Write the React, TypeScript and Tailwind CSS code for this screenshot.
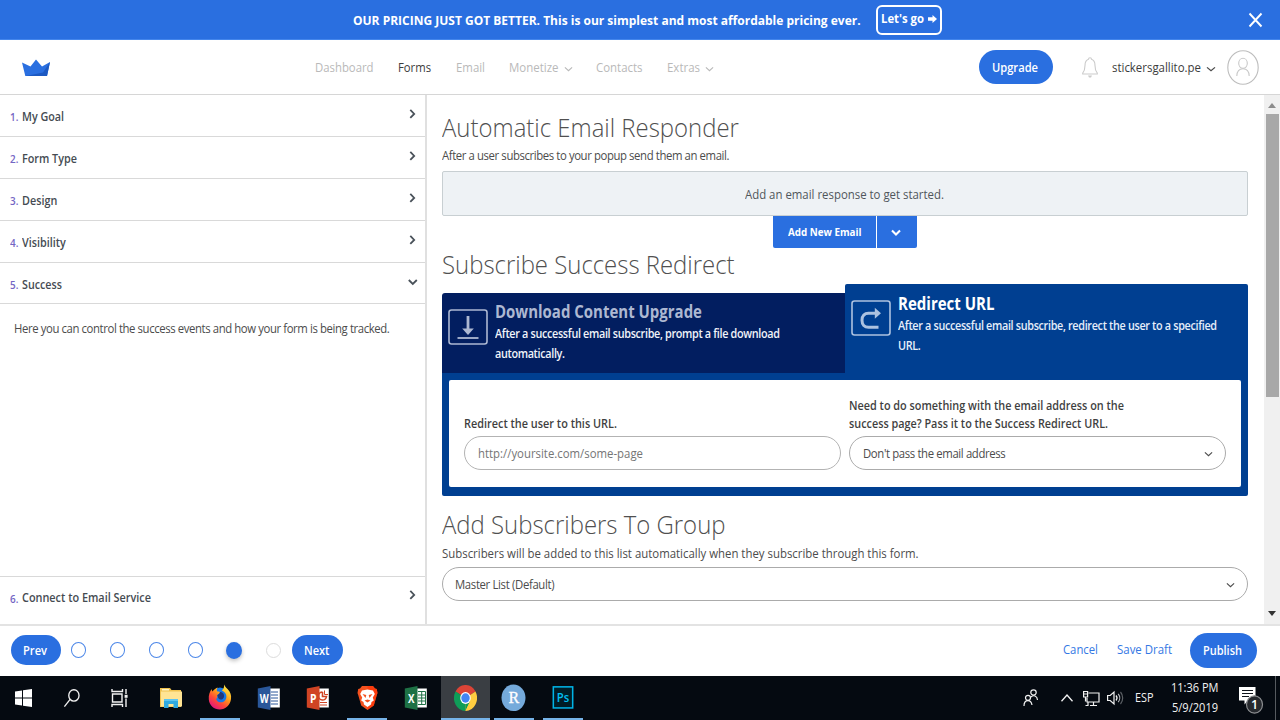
import type { ReactNode } from "react";

function T({ box = "", className, children }: { box?: string; className: string; children: ReactNode }) {
  return (
    <span className={"block shrink-0 whitespace-nowrap " + box}>
      <span className={"inline-block origin-left " + className}>{children}</span>
    </span>
  );
}

function Chevron({ className, width = 1.2 }: { className: string; width?: number }) {
  return (
    <svg viewBox="0 0 10 7" preserveAspectRatio="none" className={"shrink-0 overflow-visible " + className} fill="none" stroke="currentColor" strokeWidth={width}>
      <path d="M1 1.5l4 4 4-4" />
    </svg>
  );
}

function Banner() {
  return (
    <div className="flex h-10 items-center border-b border-[#4486ec] bg-[#2a6fe0] pl-[353px] text-[13px] font-bold text-white">
      <T box="w-[523px] pt-0.5" className="scale-x-[0.923]">
        OUR PRICING JUST GOT BETTER. This is our simplest and most affordable pricing ever.
      </T>
      <button className="mt-px flex h-[30px] w-[66px] items-center rounded-[6px] border-2 border-white pl-[2.500px]">
        <T box="w-[47.500px] -mt-0.5" className="scale-x-[0.871]">Let's go</T>
        <svg viewBox="0 0 9 8" className="-mt-0.5 h-2 w-[9px]" fill="white">
          <path d="M0 2.200h4.500V0L9 4 4.500 8V5.800H0z" />
        </svg>
      </button>
      <svg viewBox="0 0 14 16" className="ml-[306px] h-4 w-[15px]" stroke="white" strokeWidth="1.9" fill="none">
        <path d="M1 1.5l12 13M13 1.5L1 14.500" />
      </svg>
    </div>
  );
}

function Header() {
  return (
    <header className="flex h-[55px] items-center border-b border-[#d6d6d6] text-[12px] text-[#b9b9b9]">
      <svg viewBox="0 0 28 18" className="mt-px ml-[22px] h-[18px] w-7 shrink-0">
        <path d="M0 3.500l8.500 4L14 0.500l6 7L28 3l-3 14H3.300z" fill="#2a6fe0" />
        <path d="M28 3l-3 14H4l17-3.500z" fill="#1c59c2" />
      </svg>
      <nav className="ml-[265px] flex items-center pt-0.5">
        <T box="w-[83px]" className="scale-x-[0.945]">Dashboard</T>
        <T box="w-[57.5px] text-[#3c3c3c]" className="scale-x-[0.94]">Forms</T>
        <T box="w-[53px]" className="scale-x-[0.95]">Email</T>
        <T box="w-[55px]" className="scale-x-[0.956]">Monetize</T>
        <Chevron className="mt-0.5 mr-[23.500px] h-[6px] w-[9px]" />
        <T box="w-[70.5px]" className="scale-x-[0.952]">Contacts</T>
        <T box="w-[38px]" className="scale-x-[0.956]">Extras</T>
        <Chevron className="mt-0.5 h-[6px] w-[9px]" />
      </nav>
      <button className="ml-[265px] flex h-[34px] w-[74px] shrink-0 items-center rounded-full bg-[#2a6fe0] pl-[13.500px] font-semibold text-white">
        <T box="pt-0.5" className="scale-x-[0.928]">Upgrade</T>
      </button>
      <svg viewBox="0 0 16 22" className="ml-[29.5px] h-[22px] w-4 shrink-0" fill="none" stroke="#cbcbcb" strokeWidth="1.1">
        <path d="M6.500 3.200a1.500 1.500 0 0 1 3 0C12 4 13 6.500 13 9.500c0 4 .5 5.500 2.300 7.700v.8H.7v-.8C2.500 15 3 13.500 3 9.500c0-3 1-5.500 3.500-6.300z" />
        <path d="M6 19.500h4L9 21.500H7z" fill="#cbcbcb" stroke="none" />
      </svg>
      <T box="w-[94px] ml-[13.5px] pt-0.5 text-[#3c3c3c]" className="scale-x-[0.952]">stickersgallito.pe</T>
      <Chevron className="mt-[3px] h-[6px] w-[10px] text-[#4a4a4a]" />
      <svg viewBox="0 0 32 35" className="ml-[11px] h-[35px] w-8 shrink-0" fill="none" stroke="#bdbdbd" strokeWidth="1.1">
        <ellipse cx="16" cy="17.500" rx="15.200" ry="16.700" />
        <ellipse cx="16" cy="13.300" rx="4.300" ry="5" stroke="#c8c8c8" />
        <path d="M9.800 26c.2-5 2.700-7.200 6.200-7.200s6 2.200 6.200 7.200" stroke="#c8c8c8" />
      </svg>
    </header>
  );
}

function Step({ n, label, scale, open }: { n: number; label: string; scale: string; open?: boolean }) {
  return (
    <div className="flex h-[41.9px] items-center border-b border-[#d9d9d9] pl-[10px] text-[12px] font-semibold last:border-b-0">
      <T box="w-[11.5px] pt-1 text-[11px] text-[#7466c4]" className="scale-x-[0.9]">{n}.</T>
      <T box="w-[386px] pt-[3px] text-[#454b52]" className={scale}>{label}</T>
      <svg viewBox="0 0 10 10" className="-mt-[3px] size-[10px]" fill="none" stroke="#4a525a" strokeWidth="1.800">
        <path d={open ? "M.8 3L4.800 7 8.800 3" : "M2.300.9L6.200 4.900 2.300 8.900"} />
      </svg>
    </div>
  );
}

function Sidebar() {
  return (
    <aside className="flex w-[427px] shrink-0 flex-col border-r-2 border-[#e0e0e0]">
      <Step n={1} label="My Goal" scale="scale-x-[0.895]" />
      <Step n={2} label="Form Type" scale="scale-x-[0.9]" />
      <Step n={3} label="Design" scale="scale-x-[0.9]" />
      <Step n={4} label="Visibility" scale="scale-x-[0.9]" />
      <Step n={5} label="Success" scale="scale-x-[0.894]" open />
      <div className="flex-1 pt-4 pl-[14px] text-[12px] leading-[18px] text-[#4c4c4c]">
        <T className="scale-x-[0.945] tracking-[-0.42px]">
          Here you can control the success events and how your form is being tracked.
        </T>
      </div>
      <div className="h-12 border-t border-[#d9d9d9]">
        <div className="-mt-px">
          <Step n={6} label="Connect to Email Service" scale="scale-x-[0.906]" />
        </div>
      </div>
    </aside>
  );
}

function Heading({ children, className }: { children: ReactNode; className: string }) {
  return (
    <h2 className={"h-8 text-[26px] leading-8 font-light text-[#505050] " + className}>
      <T className="scale-x-[0.92]">{children}</T>
    </h2>
  );
}

function IconBox({ children }: { children: ReactNode }) {
  return (
    <svg viewBox="0 0 40 36" className="h-9 w-10 shrink-0" fill="none" stroke="currentColor">
      <rect x="1" y="1" width="38" height="34" rx="2.500" strokeWidth="1.600" />
      {children}
    </svg>
  );
}

function Main() {
  return (
    <main className="w-[837px] shrink-0 overflow-hidden pr-4 pl-[15px] text-[12px] text-[#4c4c4c]">
      <Heading className="mt-4">Automatic Email Responder</Heading>
      <p className="mt-1 h-[18px] leading-[18px]">
        <T className="scale-x-[0.945] tracking-[-0.42px]">After a user subscribes to your popup send them an email.</T>
      </p>
      <div className="mt-[6px] flex h-[45px] items-center rounded-[2px] border border-[#c8cfd2] bg-[#eef2f5] pt-0.5 pl-[302px] text-[#50565b]">
        <T className="scale-x-[0.95]">Add an email response to get started.</T>
      </div>
      <div className="ml-[331px] flex h-8 w-[144px] gap-px overflow-hidden rounded-b-[2px] text-white">
        <button className="flex h-8 w-[102.500px] items-center bg-[#2a6fe0] pl-[14.5px] text-[11px] font-bold">
          <T className="scale-x-[0.892]">Add New Email</T>
        </button>
        <button className="flex h-8 flex-1 items-center justify-center bg-[#2a6fe0] pr-px">
          <Chevron className="mt-px h-[7px] w-[10px]" width={2.1} />
        </button>
      </div>
      <Heading className="mt-0">Subscribe Success Redirect</Heading>
      <section className="mt-1 text-white">
        <div className="flex items-end">
          <div className="flex h-20 w-[403px] rounded-tl-[3px] bg-[#021e60] pt-4 pl-[6px] text-[#adb8d2]">
            <IconBox>
              <path d="M20 7v15" strokeWidth="2.800" />
              <path d="M14.200 19.500h11.600L20 26z" fill="currentColor" stroke="none" />
              <path d="M9.500 29h21" strokeWidth="1.800" />
            </IconBox>
            <div className="-mt-2 pl-[7px]">
              <T box="text-[17px] font-bold leading-[22px]" className="scale-x-[0.881]">Download Content Upgrade</T>
              <div className="pt-px font-semibold leading-5 text-[#f1f4fa]">
                <T className="scale-x-[0.9] tracking-[-0.36px]">After a successful email subscribe, prompt a file download</T>
                <T className="scale-x-[0.9] tracking-[-0.36px]">automatically.</T>
              </div>
            </div>
          </div>
          <div className="flex h-[89px] w-[403px] rounded-t-[2px] bg-[#003f91] pt-4 pl-[6px] text-[#adc2e0]">
            <IconBox>
              <path d="M27.500 27.300H17.500c-4 0-6.500-2.600-6.500-7s2.500-7 6.500-7h7" strokeWidth="3" />
              <path d="M23.800 7.800L30 13.300l-6.200 5.500z" fill="currentColor" stroke="none" />
            </IconBox>
            <div className="-mt-[7px] pl-[7px]">
              <T box="text-[17px] font-bold leading-[22px] text-white" className="scale-x-[0.884]">Redirect URL</T>
              <div className="pt-px font-semibold leading-5 text-[#e6eefa]">
                <T className="scale-x-[0.9] tracking-[-0.36px]">After a successful email subscribe, redirect the user to a specified</T>
                <T className="scale-x-[0.9] tracking-[-0.36px]">URL.</T>
              </div>
            </div>
          </div>
        </div>
        <div className="h-[123px] rounded-b-[2px] bg-[#003f91] px-[7px] pt-[7px]">
          <div className="flex h-[107px] items-end gap-[7.500px] rounded-[2px] bg-white pb-[17px] pl-[14.500px] text-[#3f3f3f]">
            <div className="w-[377.500px]">
              <label className="block pb-[3px] font-semibold leading-[18px]">
                <T className="scale-x-[0.907]">Redirect the user to this URL.</T>
              </label>
              <div className="flex h-[34px] items-center rounded-full border border-[#b3b3b3] pt-0.5 pl-[13px] text-[#757575]">
                <T className="scale-x-[0.948]">http://yoursite.com/some-page</T>
              </div>
            </div>
            <div className="w-[377.500px]">
              <label className="block pb-[3px] font-semibold leading-[18px]">
                <T className="scale-x-[0.905]">Need to do something with the email address on the</T>
                <T className="scale-x-[0.902]">success page? Pass it to the Success Redirect URL.</T>
              </label>
              <div className="flex h-[34px] items-center justify-between rounded-full border border-[#ababab] pt-0.5 pr-3 pl-[13px] text-[#4c4c4c]">
                <T className="scale-x-[0.945] tracking-[-0.39px]">Don't pass the email address</T>
                <Chevron className="h-[6px] w-[9px]" />
              </div>
            </div>
          </div>
        </div>
      </section>
      <Heading className="mt-3">Add Subscribers To Group</Heading>
      <p className="mt-[4.500px] h-[18px] leading-[18px]">
        <T className="scale-x-[0.95]">Subscribers will be added to this list automatically when they subscribe through this form.</T>
      </p>
      <div className="mt-[4.500px] flex h-[34px] items-center justify-between rounded-full border border-[#ababab] pt-0.5 pr-3 pl-3">
        <T className="scale-x-[0.945] tracking-[-0.36px]">Master List (Default)</T>
        <Chevron className="h-[6px] w-[9px]" />
      </div>
    </main>
  );
}

function Scrollbar() {
  return (
    <div className="flex w-4 shrink-0 flex-col items-center bg-[#f0f0f0]">
      <svg viewBox="0 0 8 5" className="mt-[8px] h-[5px] w-2" fill="#8c8c8c"><path d="M4 0l4 5H0z" /></svg>
      <div className="mt-[6px] h-[283px] w-[13px] bg-[#a8a8a8]" />
      <svg viewBox="0 0 8 5" className="mt-auto mb-2 h-[5px] w-2" fill="#333"><path d="M0 0h8L4 5z" /></svg>
    </div>
  );
}

function Footer() {
  return (
    <footer className="flex h-[52px] items-center border-t-2 border-[#e3e3e3] bg-white pb-0.5 pl-[10.500px] text-[12px] font-semibold text-white">
      <button className="flex h-[30px] w-[50.500px] items-center rounded-full bg-[#2a6fe0] pl-[12.500px] pt-px">
        <T className="scale-x-[0.93]">Prev</T>
      </button>
      <div className="ml-[10px] flex gap-[24.100px]">
        {[1, 2, 3, 4].map((n) => (
          <span key={n} className="h-[15.500px] w-[15px] rounded-[50%] border-[1.500px] border-[#4c87e8]" />
        ))}
      </div>
      <span className="ml-[23px] h-[17px] w-4 rounded-[50%] bg-[#2a6fe0] shadow-[0_2px_4px_rgba(0,0,0,0.25)]" />
      <span className="ml-[24px] h-[15px] w-[15px] rounded-[50%] border border-[#dcdcdc]" />
      <button className="ml-[10.500px] flex h-[30px] w-[51.500px] items-center rounded-full bg-[#2a6fe0] pt-px pl-[12.500px]">
        <T className="scale-x-[0.92]">Next</T>
      </button>
      <T box="ml-[720px] w-[53.500px] -mt-px font-normal text-[#3478e4]" className="scale-x-[0.942]">Cancel</T>
      <T box="w-[73.500px] -mt-px font-normal text-[#3478e4]" className="scale-x-[0.953]">Save Draft</T>
      <button className="flex h-[35px] w-[67px] items-center rounded-full bg-[#2a6fe0] pt-px pl-[13px]">
        <T className="scale-x-[0.915]">Publish</T>
      </button>
    </footer>
  );
}

function TaskCell({ children, bar = "", active }: { children: ReactNode; bar?: string; active?: boolean }) {
  return (
    <div className={"flex h-11 w-[49px] shrink-0 flex-col items-center " + (active ? "bg-[#3a3e43]" : "")}>
      <div className="flex h-[42px] items-center pt-px">{children}</div>
      <div className={"h-0.5 bg-[#76b3e8] " + bar} />
    </div>
  );
}

function OfficeIcon({ letter, color, sheet }: { letter: string; color: string; sheet: ReactNode }) {
  return (
    <svg viewBox="0 0 24 26" className="h-[26px] w-6">
      <path d="M12 3.500h10.800v19H12z" fill="#fff" />
      <g stroke={color} fill="none">{sheet}</g>
      <path d="M.8 3.500L13.500 1v24L.8 22.500z" fill={color} />
      <text x="7.200" y="17.500" textAnchor="middle" fontSize="12" fontWeight="700" textLength={letter === "W" ? 9 : 6.5} lengthAdjust="spacingAndGlyphs" fill="#fff">{letter}</text>
    </svg>
  );
}

function Taskbar() {
  return (
    <div className="flex h-11 bg-[#050a11] text-[13px] text-[#f2f2f2]">
      <div className="flex w-[146.500px] shrink-0 items-center">
        <svg viewBox="0 0 17 18" className="ml-[15px] h-[18px] w-[17px]" fill="#fff">
          <path d="M0 2.500l7-1V8.500H0zM8 1.300L17 0v8.500H8zM0 9.500h7v7l-7-1zM8 9.500h9V18l-9-1.300z" />
        </svg>
        <svg viewBox="0 0 18 20" className="ml-[31px] h-[19px] w-[18px]" fill="none" stroke="#f2f2f2" strokeWidth="1.400">
          <ellipse cx="11" cy="6.800" rx="5.400" ry="6" />
          <path d="M7 11L1 18.500" />
        </svg>
        <svg viewBox="0 0 17 18" className="ml-[30px] h-[18px] w-[17px]" fill="none" stroke="#f2f2f2" strokeWidth="1.400">
          <path d="M1 0v2.500h10.500V0M1 18v-2.500h10.500V18M1.500 5h9.500v8H1.500zM15 0v5M15 9.500V18" />
          <path d="M13.600 5.800h3v3h-3z" fill="#f2f2f2" stroke="none" />
        </svg>
      </div>
      <TaskCell>
        <svg viewBox="0 0 22 20" className="h-5 w-[22px]">
          <path d="M0 0h10l1.500 2H21v17H0z" fill="#f0c24e" />
          <path d="M1 3.500h21V18.500H1z" fill="#ffe494" />
          <path d="M2 1h7v1.500H2z" fill="#fff3c4" />
          <path d="M4 20v-9h14v9h-4.500v-4h-5v4z" fill="#2fa9e0" />
          <path d="M4 11h14v2H4z" fill="#5cc4f0" />
        </svg>
      </TaskCell>
      <TaskCell bar="w-10">
        <svg viewBox="0 0 24 26" className="-mt-px h-[26px] w-6">
          <defs>
            <linearGradient id="fox" x1=".85" y1=".05" x2=".25" y2=".95">
              <stop offset="0" stopColor="#fff04a" />
              <stop offset=".4" stopColor="#ffa31a" />
              <stop offset=".7" stopColor="#ff4a36" />
              <stop offset="1" stopColor="#e3197a" />
            </linearGradient>
          </defs>
          <ellipse cx="12" cy="12.500" rx="8" ry="9" fill="#1679e8" />
          <path d="M16 .5c1 2 2 3 3.500 4.500 3 3 4 6 3.500 10-.8 6-5.500 10.500-11.200 10.500S1.300 21.500.8 15.500C.4 11 1.800 7.500 3.800 5c0 1.200.2 2 .8 2.500C6 5.500 8 4 9.800 3.500c-.8 1-1.200 2.500-.9 3.500.8.8 2.300.5 3.100 1-.2 1.800-1.800 2-2.800 3.200.8 2.300-.8 3-1 4.200 1.300 2.600 4.500 3.800 7.300 2.300 3-1.700 3.500-5 2.300-7.700-.8-2-3-3-4-3.500C15.500 5 16.500 3 16 .5z" fill="url(#fox)" />
          <path d="M12 8c3 0 4.500 2.500 4 5-.6 2.200-2.800 3-4.500 2.300C10 14.500 9.800 13 9.300 11.300c1-1 2.500-1.500 2.700-3.300z" fill="#20387c" />
        </svg>
      </TaskCell>
      <TaskCell>
        <OfficeIcon letter="W" color="#2a579a" sheet={<path d="M14 7h7M14 10h7M14 13h7M14 16h7M14 19h7" />} />
      </TaskCell>
      <TaskCell>
        <OfficeIcon letter="P" color="#d04424" sheet={<><path d="M14 17.500h7M14 20h7" /><path d="M16.500 7v4.500h4a4 4 0 1 1-4-4.500" strokeWidth="1.600" /><path d="M18.500 5.500v4H22" /></>} />
      </TaskCell>
      <TaskCell bar="w-10">
        <svg viewBox="0 0 21 26" className="h-[26px] w-[21px]">
          <path d="M5 1h11l2 2.500 1.800.5L20.500 8l-.7 2-3 10.500L10.500 25 4.200 20.500 1.200 10 .5 8l.7-4L3 3.500z" fill="#f4511e" />
          <path d="M10.500 1H16l2 2.500 1.800.5.7 4-3.700 12.500-6.300 4.500z" fill="#ff2b00" opacity=".55" />
          <path d="M5 5.500l5.500-1 5.500 1 1.800 3.500-2 3.500 1 3-2.300 1.500-.5 2.500-3.500 2.500L7 19.500 6.500 17l-2.300-1.500 1-3-2-3.500z" fill="#fff" />
          <path d="M5.500 9l3.800 1-.8 3zM15.500 9l-3.800 1 .8 3zM7.500 15.500l3-1 3 1-3 2z" fill="#f4511e" />
        </svg>
      </TaskCell>
      <TaskCell>
        <OfficeIcon letter="X" color="#1e7145" sheet={<path d="M14 6.500h7.500v13H14M14 10h7.500M14 13h7.500M14 16h7.500M17.700 6v14" />} />
      </TaskCell>
      <TaskCell active bar="w-[49px]">
        <svg viewBox="0 0 48 48" preserveAspectRatio="none" className="h-[26px] w-[23px]">
          <path d="M24 24L3.200 12A24 24 0 0 1 44.800 12z" fill="#db4437" />
          <path d="M24 24L3.200 12A24 24 0 0 0 24 48z" fill="#0f9d58" />
          <path d="M24 24L44.800 12A24 24 0 0 1 24 48z" fill="#ffcd40" />
          <path d="M24 13h21.300A24 24 0 0 0 44.800 12L24 10z" fill="#db4437" />
          <path d="M14.500 29.500L3.200 12l6 4zM24 48l9.500-18.500L24 35z" fill="#0f9d58" />
          <path d="M24 48l10-18 4 8z" fill="#ffcd40" />
          <circle cx="24" cy="24" r="11" fill="#fff" />
          <circle cx="24" cy="24" r="8.800" fill="#4285f4" />
        </svg>
      </TaskCell>
      <TaskCell bar="w-10">
        <svg viewBox="0 0 25 28" className="-ml-px h-7 w-[25px]">
          <ellipse cx="12.500" cy="13.800" rx="12" ry="13.300" fill="#75aadb" />
          <text x="12.800" y="19" textAnchor="middle" fontSize="16" className="font-['Liberation_Serif',serif]" fill="#fff" stroke="#fff" strokeWidth=".3">R</text>
        </svg>
      </TaskCell>
      <TaskCell bar="w-10">
        <svg viewBox="0 0 22 24" className="-mt-px h-[23px] w-[22px]">
          <rect x=".9" y=".9" width="20.200" height="22" fill="#001d26" stroke="#00b3e6" strokeWidth="1.600" />
          <text x="11" y="16.800" textAnchor="middle" fontSize="12.500" fontWeight="600" textLength="13" lengthAdjust="spacingAndGlyphs" fill="#00c0f3">Ps</text>
        </svg>
      </TaskCell>
      <div className="flex flex-1 items-center pl-[435px]">
        <svg viewBox="0 0 16 18" className="h-[18px] w-4 shrink-0" fill="none" stroke="#f2f2f2" strokeWidth="1.200">
          <circle cx="5" cy="8.800" r="2.500" />
          <path d="M1 17c0-3.500 1.500-5.300 4-5.300S8.500 13 9 16" />
          <circle cx="10.500" cy="3.500" r="2.700" />
          <path d="M8 8c2.500-2.500 6.300-1 6.500 3" />
        </svg>
        <svg viewBox="0 0 12 8" className="ml-[22px] h-2 w-3 shrink-0" fill="none" stroke="#f2f2f2" strokeWidth="1.300"><path d="M.5 7.300L6 1l5.500 6.300" /></svg>
        <svg viewBox="0 0 17 17" className="ml-[10px] h-[17px] w-[17px] shrink-0" fill="none" stroke="#f2f2f2" strokeWidth="1.200">
          <path d="M5.500 3H16v9H4V8M10.500 12v3M7 15.500h7M2.500 7v4.500M2.500 15.500H5V12M.6 1.500h4V7h-4zM.6 4h4" />
        </svg>
        <svg viewBox="0 0 17 16" className="ml-[7px] h-4 w-[17px] shrink-0" fill="none" stroke="#f2f2f2" strokeWidth="1.200">
          <path d="M.6 5.500h2.600L7 2v12L3.200 10.500H.6z" />
          <path d="M9 5.500c1.200 1.400 1.200 3.600 0 5" />
          <path d="M11.200 3.800c2 2.400 2 6 0 8.400" stroke="#b5b7ba" />
          <path d="M13.500 2c2.900 3.300 2.900 8.700 0 12" stroke="#5d6166" />
        </svg>
        <T box="ml-[11px] w-[36.500px]" className="scale-x-[0.834]">ESP</T>
        <div className="-mt-0.5 w-[67.500px] shrink-0 leading-5">
          <T className="scale-x-[0.848]">11:36 PM</T>
          <T box="pl-px" className="scale-x-[0.85]">5/9/2019</T>
        </div>
        <svg viewBox="0 0 25 28" className="mt-1 h-7 w-[25px] shrink-0" fill="none">
          <path d="M0 1h16.500v13.500H9L5.500 18.500v-4H0z" fill="#fff" />
          <path d="M3 4.500h11M3 7.500h11M3 10.500h7" stroke="#10151c" strokeWidth="1.200" />
          <ellipse cx="15.500" cy="18.500" rx="8" ry="8.700" fill="#26292e" stroke="#8b8d90" strokeWidth="1.200" />
          <text x="15.500" y="23" textAnchor="middle" fontSize="12.500" fontWeight="600" fill="#fff">1</text>
        </svg>
        <div className="ml-auto h-11 w-[5px] shrink-0 border-l border-[#565a5f]" />
      </div>
    </div>
  );
}

export default function App() {
  return (
    <div className="flex h-[720px] w-[1280px] flex-col overflow-hidden bg-white font-['Open_Sans','Noto_Sans',sans-serif]">
      <Banner />
      <Header />
      <div className="flex h-[529px] shrink-0">
        <Sidebar />
        <Main />
        <Scrollbar />
      </div>
      <Footer />
      <Taskbar />
    </div>
  );
}
